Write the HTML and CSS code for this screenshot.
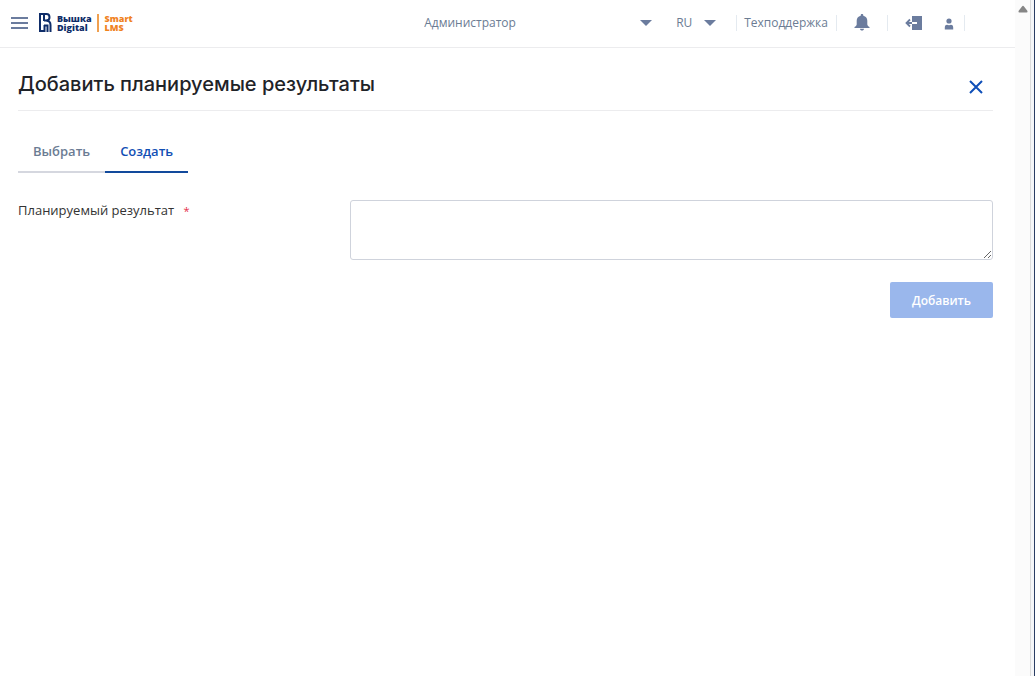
FILE: index.html
```html
<!DOCTYPE html>
<html lang="ru">
  <head>
    <meta charset="UTF-8" />
    <meta name="viewport" content="width=device-width, initial-scale=1.0" />
    <title>Smart LMS</title>
    <link rel="stylesheet" href="styles.css">
  </head>
  <body>
    <div class="page">
      <header class="header">
        <button class="menu-btn" type="button" aria-label="Меню">
          <span></span>
          <span></span>
          <span></span>
        </button>
        <a class="logo" href="#">
          <svg class="logo-mark" viewBox="0 0 13 20" width="13" height="20" fill="none" stroke="#0f2d69" stroke-width="2">
            <path d="M1 19V1H7.500C11.500 1 11.500 7.500 7.500 7.500H5" />
            <path d="M5 1V8M0 18H5.500V12" />
            <path d="M7.500 7.500C11 8 11.500 10 11.500 12V19M8.500 19V12.500H5" />
          </svg>
          <span class="logo-text">Вышка<br>Digital</span>
          <span class="logo-text logo-product">Smart<br>LMS</span>
        </a>
        <div class="picker role-picker">
          <select aria-label="Роль">
            <option>Администратор</option>
          </select>
        </div>
        <div class="picker lang-picker">
          <select aria-label="Язык">
            <option>RU</option>
          </select>
        </div>
        <a class="support" href="#">Техподдержка</a>
        <button class="icon-btn bell-btn" type="button" aria-label="Уведомления">
          <svg viewBox="0 0 16 17" width="16" height="17" fill="#6b7c9e">
            <path d="M8 0c.8 0 1.300.5 1.300 1.300v.5c2.600.6 4 2.500 4 5v3.400c0 1.200.8 1.900 2.200 2.800v1H.5v-1c1.400-.9 2.200-1.600 2.200-2.800V6.800c0-2.500 1.400-4.400 4-5v-.5C6.700.5 7.200 0 8 0zM6 14.800h4C10 16 9.200 16.600 8 16.600S6 16 6 14.800z" />
          </svg>
        </button>
        <div class="account">
          <button class="icon-btn" type="button" aria-label="Выйти">
            <svg viewBox="0 0 18 16" width="18" height="16">
              <path d="M7 1h10v14H7z" fill="#6b7c9e" />
              <path d="M7 7h5v2H7z" fill="#fff" />
              <path d="M7 8H1.500M5 4.500L1.500 8L5 11.500" fill="none" stroke="#6b7c9e" stroke-width="1.800" />
            </svg>
          </button>
          <button class="icon-btn profile-btn" type="button" aria-label="Профиль">
            <svg viewBox="0 0 10 12" width="10" height="12" fill="#6b7c9e">
              <circle cx="5" cy="3" r="2.600" />
              <path d="M.8 11.500V9.500C.8 7.500 2 6.800 3 6.800c1.200.6 2.800.6 4 0 1 0 2.200.7 2.200 2.700v2z" />
            </svg>
          </button>
        </div>
      </header>
      <main class="content">
        <div class="title-row">
          <h1>Добавить планируемые результаты</h1>
          <button class="close-btn" type="button" aria-label="Закрыть">
            <svg viewBox="0 0 14 14" width="14" height="14" fill="none" stroke="#0f4fb8" stroke-width="2">
              <path d="M1 1L13 13M13 1L1 13" />
            </svg>
          </button>
        </div>
        <div class="tabs" role="tablist">
          <button class="tab" type="button" role="tab" aria-selected="false">Выбрать</button>
          <button class="tab active" type="button" role="tab" aria-selected="true">Создать</button>
        </div>
        <form class="form">
          <label for="result">Планируемый результат <span class="required">*</span></label>
          <textarea id="result"></textarea>
          <button class="submit-btn" type="submit" disabled>Добавить</button>
        </form>
      </main>
    </div>
    <div class="scrollbar">
      <svg viewBox="0 0 10 8" width="10" height="8" fill="#858585">
        <path d="M4 1.500Q5 0 6 1.500L9.500 6Q9.800 7.500 8.500 7.500H1.500Q.2 7.500.5 6z" />
      </svg>
    </div>
    <div class="window-edge"></div>
  </body>
</html>
```
FILE: styles.css
```css
* {
  box-sizing: border-box;
  margin: 0;
  padding: 0;
}
body {
  display: flex;
  min-height: 100vh;
  background-color: #fff;
  color: #1f2328;
  font-family: "Open Sans", "Noto Sans", sans-serif;
  font-size: 13px;
}
button,
select,
textarea {
  font: inherit;
  background: none;
  border: none;
}
button {
  cursor: pointer;
}
a {
  color: inherit;
  text-decoration: none;
}
.page {
  flex: 1;
  min-width: 0;
}
.header {
  display: flex;
  align-items: center;
  height: 48px;
  padding: 0 50px 2px 11px;
  border-bottom: 1px solid #ececee;
  color: #6b7c93;
}
.menu-btn {
  display: flex;
  flex-direction: column;
  gap: 3px;
  width: 17px;
}
.menu-btn span {
  height: 2px;
  background-color: #6b7c9e;
}
.logo {
  display: flex;
  align-items: center;
  gap: 5px;
  margin-left: 11px;
  color: #0f2d69;
}
.logo-text {
  font-size: 9px;
  font-weight: 800;
  line-height: 9px;
}
.logo-product {
  padding-left: 6px;
  border-left: 2px solid #f0a050;
  color: #f0821e;
}
.picker {
  display: flex;
  align-items: center;
}
.picker::after {
  content: "";
  border: 6px solid transparent;
  border-top-color: #6b7c9e;
  border-bottom: none;
}
.picker select {
  flex: 1;
  min-width: 0;
  appearance: none;
  color: inherit;
  font-size: 12px;
  font-weight: 500;
}
.role-picker {
  width: 228px;
  margin-left: auto;
}
.lang-picker {
  width: 40px;
  margin: 0 20px 0 24px;
}
.support {
  padding: 0 8px 0 7px;
  border-left: 1px solid #e4eaf0;
  border-right: 1px solid #e4eaf0;
  font-size: 12px;
  font-weight: 500;
  line-height: 16px;
}
.icon-btn {
  display: flex;
}
.bell-btn {
  margin: 0 17px;
}
.account {
  display: flex;
  align-items: center;
  gap: 21px;
  padding: 0 10px 0 17px;
  border-left: 1px solid #e4eaf0;
  border-right: 1px solid #e4eaf0;
}
.profile-btn {
  padding-top: 2px;
}
.content {
  padding: 16px 22px 0 18px;
}
.title-row {
  display: flex;
  align-items: center;
  justify-content: space-between;
  height: 47px;
  padding-right: 10px;
  border-bottom: 1px solid #ececee;
}
h1 {
  padding-bottom: 6px;
  font-family: Inter, "Open Sans", sans-serif;
  font-size: 20px;
  font-weight: 500;
}
.close-btn {
  display: flex;
}
.tabs {
  display: flex;
  margin: 20px 0 27px;
}
.tab {
  height: 42px;
  padding: 0 15px;
  border-bottom: 2px solid #d5d7df;
  color: #6b7c93;
  font-weight: 600;
}
.tab.active {
  border-color: #124a9c;
  color: #124fb4;
}
.form {
  display: grid;
  grid-template-columns: 1fr 2fr;
  gap: 22px 10px;
  align-items: start;
}
.form label {
  padding-top: 1px;
  color: #333;
}
.required {
  margin-left: 6px;
  color: #e5304a;
  font-size: 11px;
}
.form textarea {
  width: 100%;
  height: 60px;
  padding: 8px;
  border: 1px solid #cfd3dc;
  border-radius: 3px;
  resize: vertical;
}
.submit-btn {
  grid-column: 2;
  justify-self: end;
  height: 36px;
  padding: 0 22px;
  border-radius: 2px;
  background-color: #9ab7ec;
  color: #fff;
  font-size: 12px;
  font-weight: 600;
}
.scrollbar {
  display: flex;
  justify-content: center;
  width: 16px;
  padding-top: 5px;
  background-color: #fbfbfb;
  border-right: 1px solid #dcdcdc;
}
.window-edge {
  width: 4px;
  background-color: #f5f6f8;
  border-right: 1px solid #2a3d63;
}
```
